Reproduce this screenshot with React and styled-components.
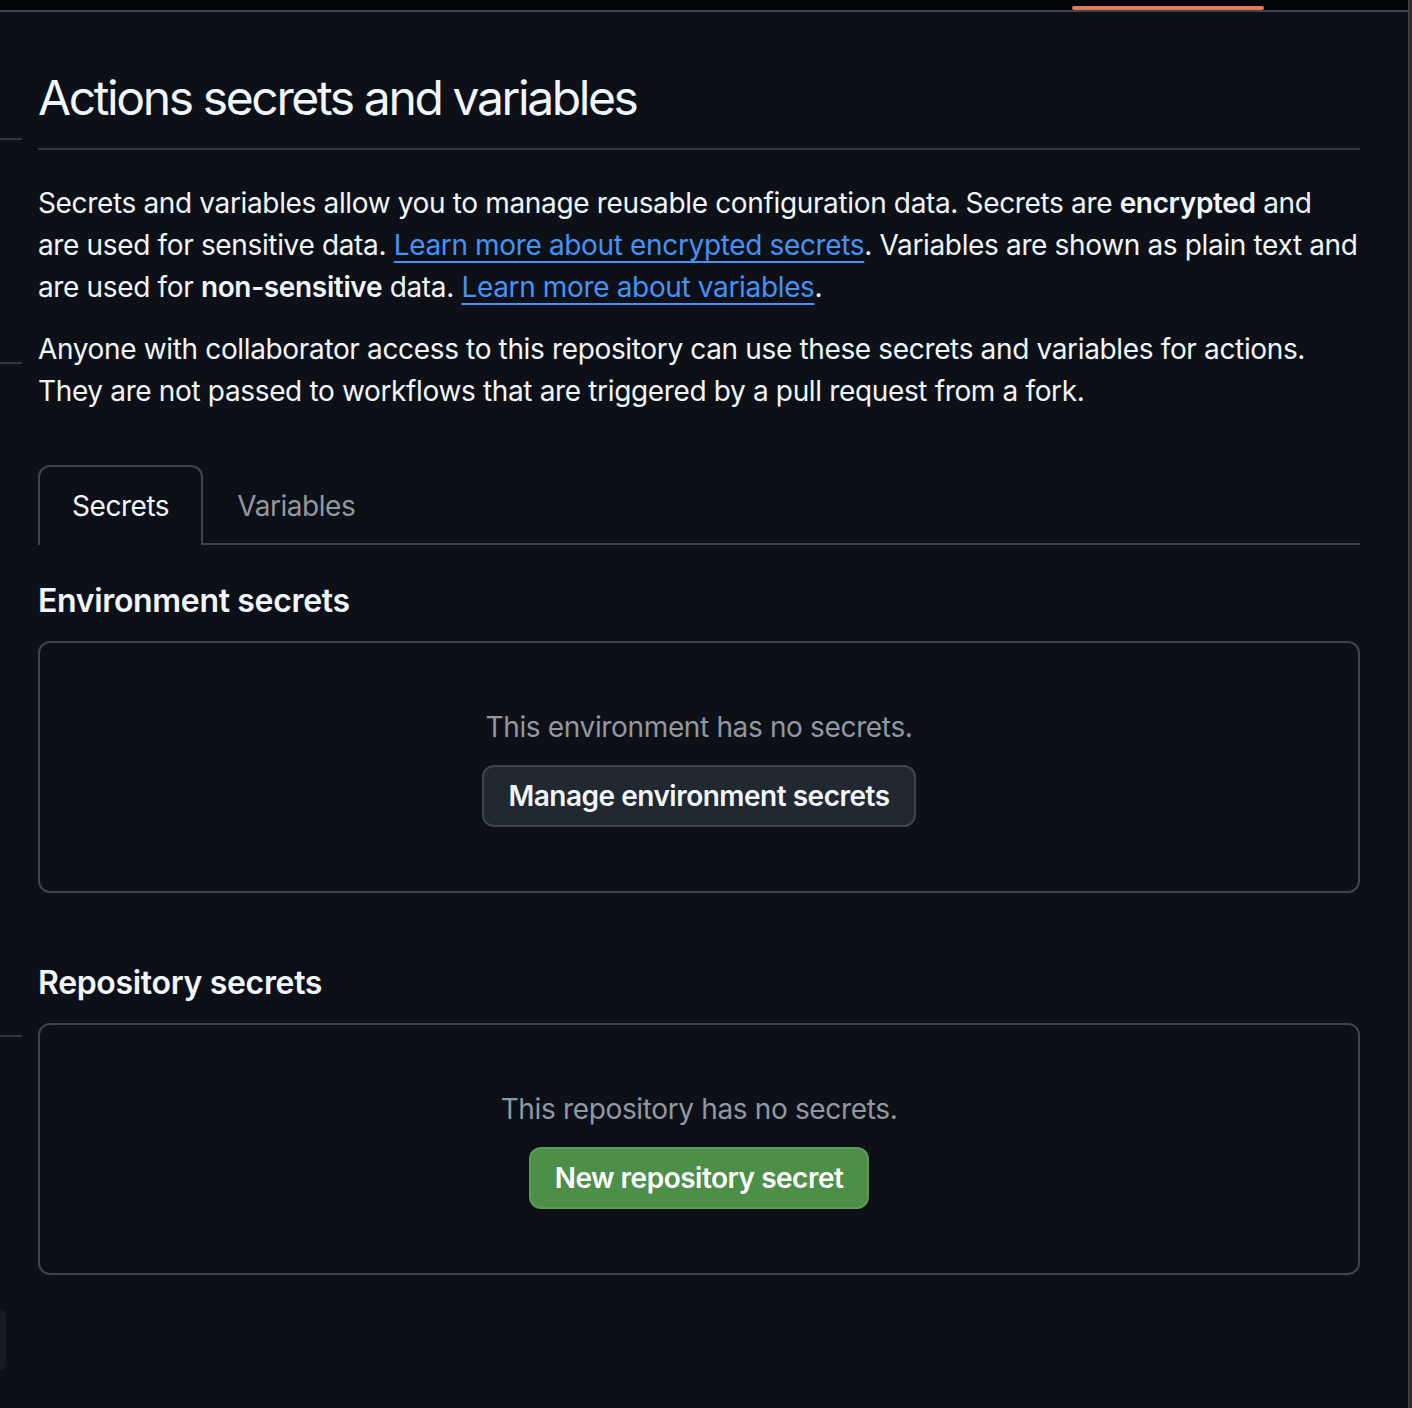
import React from 'react'
import styled, { createGlobalStyle } from 'styled-components'

const GlobalStyle = createGlobalStyle`
    html, body {
        margin: 0;
        padding: 0;
        background: #0d1117;
    }
    body {
        font-family: Inter, "Noto Sans", "Liberation Sans", sans-serif;
        color: #f0f6fc;
        letter-spacing: -0.35px;
        -webkit-font-smoothing: antialiased;
    }
    * { box-sizing: border-box; }
`

const App = () => {
    return (<>
        <GlobalStyle />
        <Shell>
            <Window>
                <TopBar>
                    <ActiveIndicator />
                </TopBar>
                <Body>
                    <Sidebar>
                        <SideDivider $gap={126} />
                        <SideDivider $gap={222} />
                        <SideDivider $gap={671} />
                        <SideCard />
                    </Sidebar>
                    <Main>
                        <Subhead>
                            <h2>Actions secrets and variables</h2>
                        </Subhead>
                        <Intro>
                            Secrets and variables allow you to manage reusable configuration data. Secrets are <strong>encrypted</strong> and
                            are used for sensitive data. <a href="#">Learn more about encrypted secrets</a>. Variables are shown as plain text and
                            are used for <strong>non-sensitive</strong> data. <a href="#">Learn more about variables</a>.
                        </Intro>
                        <Intro>
                            Anyone with collaborator access to this repository can use these secrets and variables for actions.
                            They are not passed to workflows that are triggered by a pull request from a fork.
                        </Intro>
                        <TabNav>
                            <Tab $selected>Secrets</Tab>
                            <Tab>Variables</Tab>
                        </TabNav>

                        <SectionTitle $top={32}>Environment secrets</SectionTitle>
                        <Blankslate>
                            <p>This environment has no secrets.</p>
                            <Button>Manage environment secrets</Button>
                        </Blankslate>

                        <SectionTitle $top={66}>Repository secrets</SectionTitle>
                        <Blankslate>
                            <p>This repository has no secrets.</p>
                            <Button $primary>New repository secret</Button>
                        </Blankslate>
                    </Main>
                </Body>
            </Window>
            <EdgeStrip />
        </Shell>
    </>)
}

const Shell = styled.div`
    display: flex;
    min-height: 100vh;
    background: #0d1117;
`

const Window = styled.div`
    flex: 1;
    display: flex;
    flex-direction: column;
`

const EdgeStrip = styled.div`
    width: 4px;
    background: #2f2f2f;
    border-left: 1px solid #474747;
`

const TopBar = styled.header`
    height: 12px;
    background: #010409;
    border-bottom: 2px solid #3d444d;
    display: flex;
    padding: 6px 0 0 1072px;
`

const ActiveIndicator = styled.span`
    width: 192px;
    height: 4px;
    border-radius: 3px;
    background: #f78166;
    opacity: 0.92;
`

const Body = styled.div`
    display: flex;
    flex: 1;
`

const Sidebar = styled.aside`
    width: 22px;
    display: flex;
    flex-direction: column;
`

const SideDivider = styled.div`
    height: 2px;
    margin-top: ${p => p.$gap}px;
    background: #30363d;
`

const SideCard = styled.div`
    width: 6px;
    height: 61px;
    margin-top: 272px;
    background: #151b23;
    border-radius: 0 10px 10px 0;
`

const Main = styled.main`
    width: 1322px;
    margin-left: 16px;
    padding-top: 50px;
    padding-bottom: 80px;
`

const Subhead = styled.div`
    border-bottom: 2px solid #30363d;
    padding-bottom: 14px;
    h2 {
        margin: 0;
        font-size: 48px;
        line-height: 72px;
        font-weight: 400;
        letter-spacing: -2.38px;
    }
`

const Intro = styled.p`
    margin: 32px 0 20px;
    font-size: 28px;
    line-height: 42px;
    & + & {
        margin-top: 0;
    }
    strong {
        font-weight: 600;
    }
    a {
        color: #4493f8;
        text-decoration: underline;
        text-decoration-thickness: 2px;
        text-underline-offset: 6px;
    }
`

const TabNav = styled.nav`
    display: flex;
    margin-top: 53px;
    border-bottom: 2px solid #3d444d;
`

const Tab = styled.div`
    height: 80px;
    margin-bottom: -2px;
    padding: 0 32px;
    display: flex;
    align-items: center;
    font-size: 28px;
    letter-spacing: -0.45px;
    border: 2px solid ${p => p.$selected ? '#3d444d' : 'transparent'};
    border-bottom: 0;
    border-radius: 12px 12px 0 0;
    background: ${p => p.$selected ? '#0d1117' : 'transparent'};
    color: ${p => p.$selected ? '#f0f6fc' : '#9198a1'};
`

const SectionTitle = styled.h3`
    margin: ${p => p.$top}px 0 16px;
    font-size: 32px;
    line-height: 48px;
    font-weight: 600;
    letter-spacing: -0.33px;
`

const Blankslate = styled.div`
    border: 2px solid #3d444d;
    border-radius: 12px;
    padding: 63px 32px 64px;
    display: flex;
    flex-direction: column;
    align-items: center;
    p {
        margin: 0 0 17px;
        font-size: 28px;
        line-height: 42px;
        color: #9198a1;
    }
`

const Button = styled.button`
    height: 62px;
    padding: 0 24px;
    border-radius: 12px;
    font-family: inherit;
    font-size: 28px;
    font-weight: 600;
    letter-spacing: -0.5px;
    color: ${p => p.$primary ? '#ffffff' : '#f0f6fc'};
    background: ${p => p.$primary ? '#4b8f48' : '#212830'};
    border: 2px solid ${p => p.$primary ? 'rgba(255,255,255,0.1)' : '#3d444d'};
    box-shadow: ${p => p.$primary ? '0 0 0 1px rgba(0,0,0,0.2)' : 'none'};
    cursor: pointer;
`

export default App
